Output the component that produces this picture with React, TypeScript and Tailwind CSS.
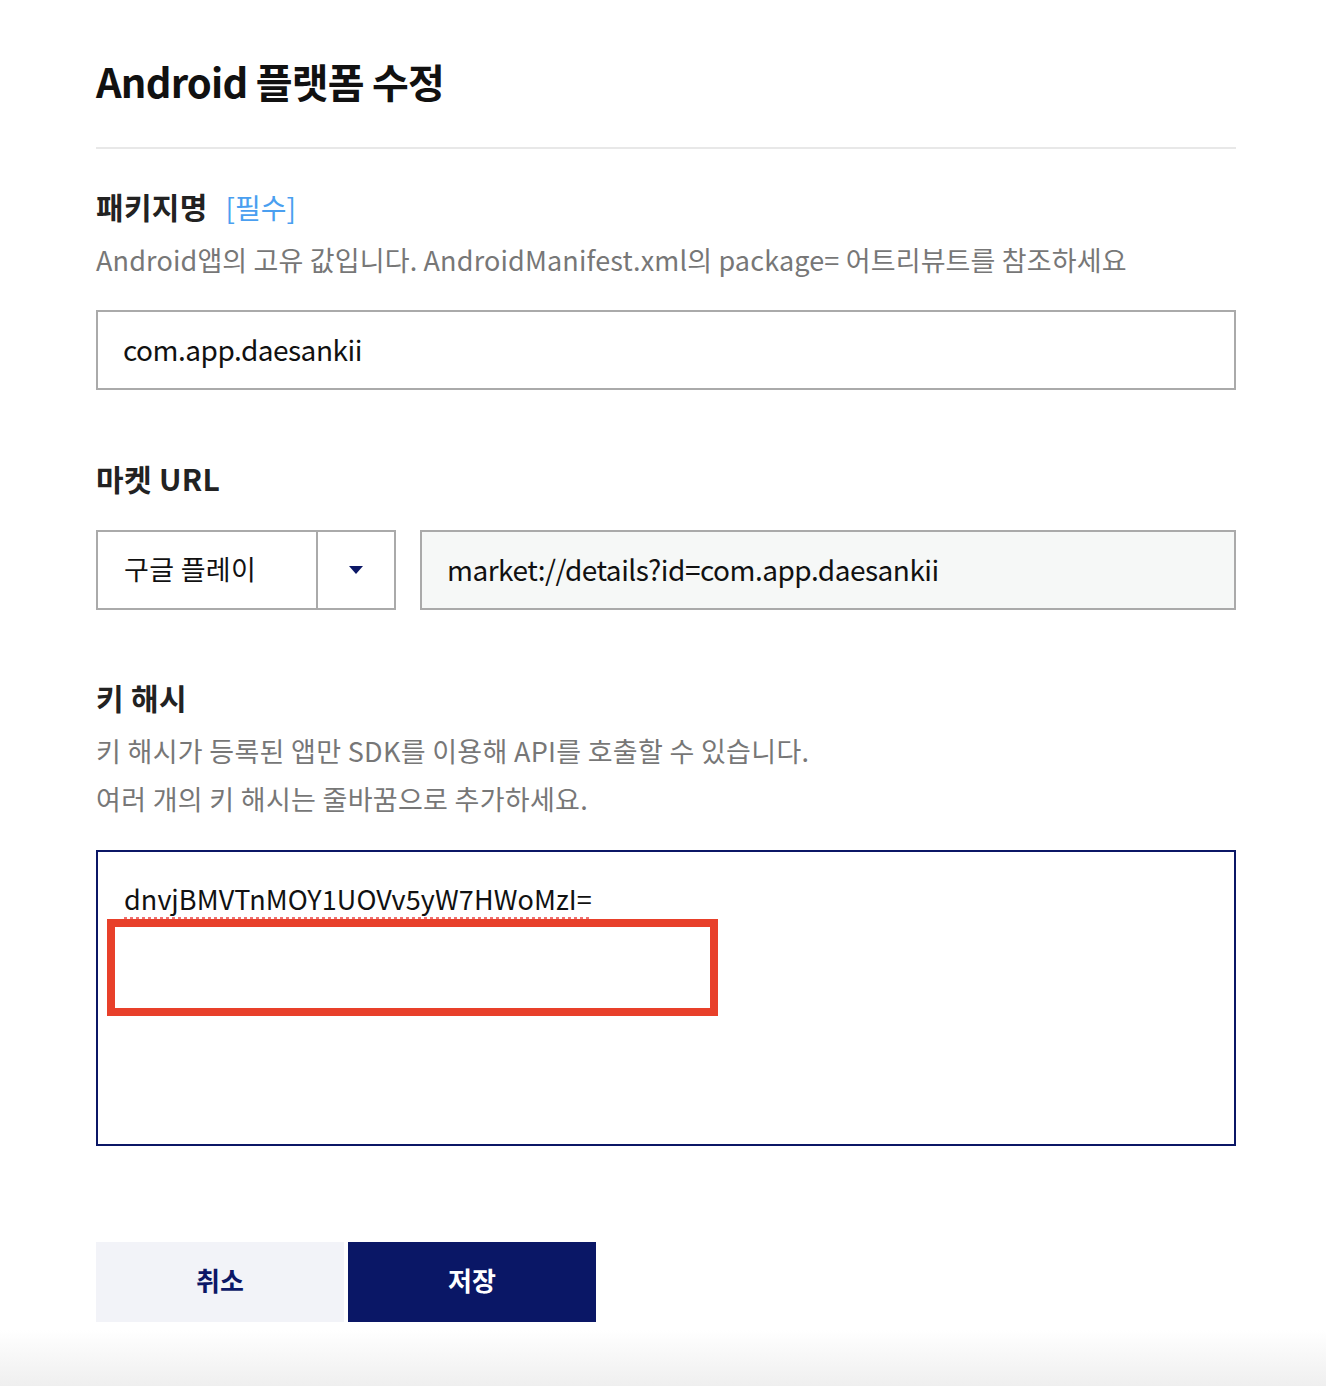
import { useState } from 'react';

const font = "font-['Noto_Sans_CJK_KR','Noto_Sans',sans-serif]";

function SectionTitle({ children }: { children: React.ReactNode }) {
  return <h3 className="text-[30px] font-bold leading-[40px] text-[#222] tracking-[0.3px]">{children}</h3>;
}

export default function App() {
  const [store] = useState('구글 플레이');

  return (
    <div className={`${font} min-h-[1386px] bg-white text-[#111] antialiased flex flex-col`}>
      <div className="px-[96px] w-[1332px] flex-1">
        <h1 className="pt-[57px] text-[40px] font-bold leading-[48px] tracking-[-0.8px] text-[#111]">Android 플랫폼 수정</h1>
        <div className="mt-[42px] h-[2px] bg-[#e8e8e8]" />

        <div className="mt-[37px] flex items-baseline gap-[18px]">
          <SectionTitle>패키지명</SectionTitle>
          <span className="text-[28px] text-[#4a9ff0]">[필수]</span>
        </div>
        <p className="mt-[12px] text-[27px] leading-[40px] text-[#777] tracking-[0.15px]">
          Android앱의 고유 값입니다. AndroidManifest.xml의 package= 어트리뷰트를 참조하세요
        </p>
        <div className="mt-[30px] h-[80px] border-2 border-[#aaa] flex items-center pl-[25px] pb-[3px] text-[28px] text-[#111] tracking-[-0.5px]">
          com.app.daesankii
        </div>

        <div className="mt-[68px]">
          <SectionTitle>마켓 URL</SectionTitle>
        </div>
        <div className="mt-[32px] flex gap-[24px]">
          <div className="w-[300px] h-[80px] border-2 border-[#aaa] flex">
            <div className="flex-1 flex items-center pl-[26px] pb-[2px] text-[27px] text-[#111] tracking-[0.3px]">{store}</div>
            <div className="w-[78px] border-l-2 border-[#aaa] flex items-center justify-center">
              <svg width="16" height="10" viewBox="0 0 16 10">
                <path d="M1 1h14L8 9z" fill="#0b1766" />
              </svg>
            </div>
          </div>
          <div className="flex-1 h-[80px] border-2 border-[#aaa] bg-[#f6f8f7] flex items-center pl-[25px] pb-[3px] text-[28px] text-[#111] tracking-[-0.5px]">
            market://details?id=com.app.daesankii
          </div>
        </div>

        <div className="mt-[67px]">
          <SectionTitle>키 해시</SectionTitle>
        </div>
        <div className="mt-[10px] text-[27px] leading-[48px] text-[#777] tracking-[0.3px]">
          <p>키 해시가 등록된 앱만 SDK를 이용해 API를 호출할 수 있습니다.</p>
          <p>여러 개의 키 해시는 줄바꿈으로 추가하세요.</p>
        </div>
        <div className="relative mt-[27px] h-[296px] border-2 border-[#0b1766] pt-[29px] pl-[26px]">
          <span className="text-[27px] leading-[36px] text-[#111] tracking-[0.1px] underline decoration-dotted decoration-[#f07070] decoration-[3px] underline-offset-[7px]">
            dnvjBMVTnMOY1UOVv5yW7HWoMzI=
          </span>
          <div className="absolute left-[9px] top-[67px] w-[611px] h-[97px] border-[8px] border-[#e8402a]" />
        </div>

        <div className="mt-[96px] flex gap-[4px]">
          <button className="w-[248px] h-[80px] pb-[6px] bg-[#f2f3f8] text-[#0b1766] text-[26px] font-bold">취소</button>
          <button className="w-[248px] h-[80px] pb-[6px] bg-[#0a1766] text-white text-[26px] font-bold">저장</button>
        </div>
      </div>
      <div className="h-[56px] mt-[8px] bg-gradient-to-b from-white to-[#efefef]" />
    </div>
  );
}
